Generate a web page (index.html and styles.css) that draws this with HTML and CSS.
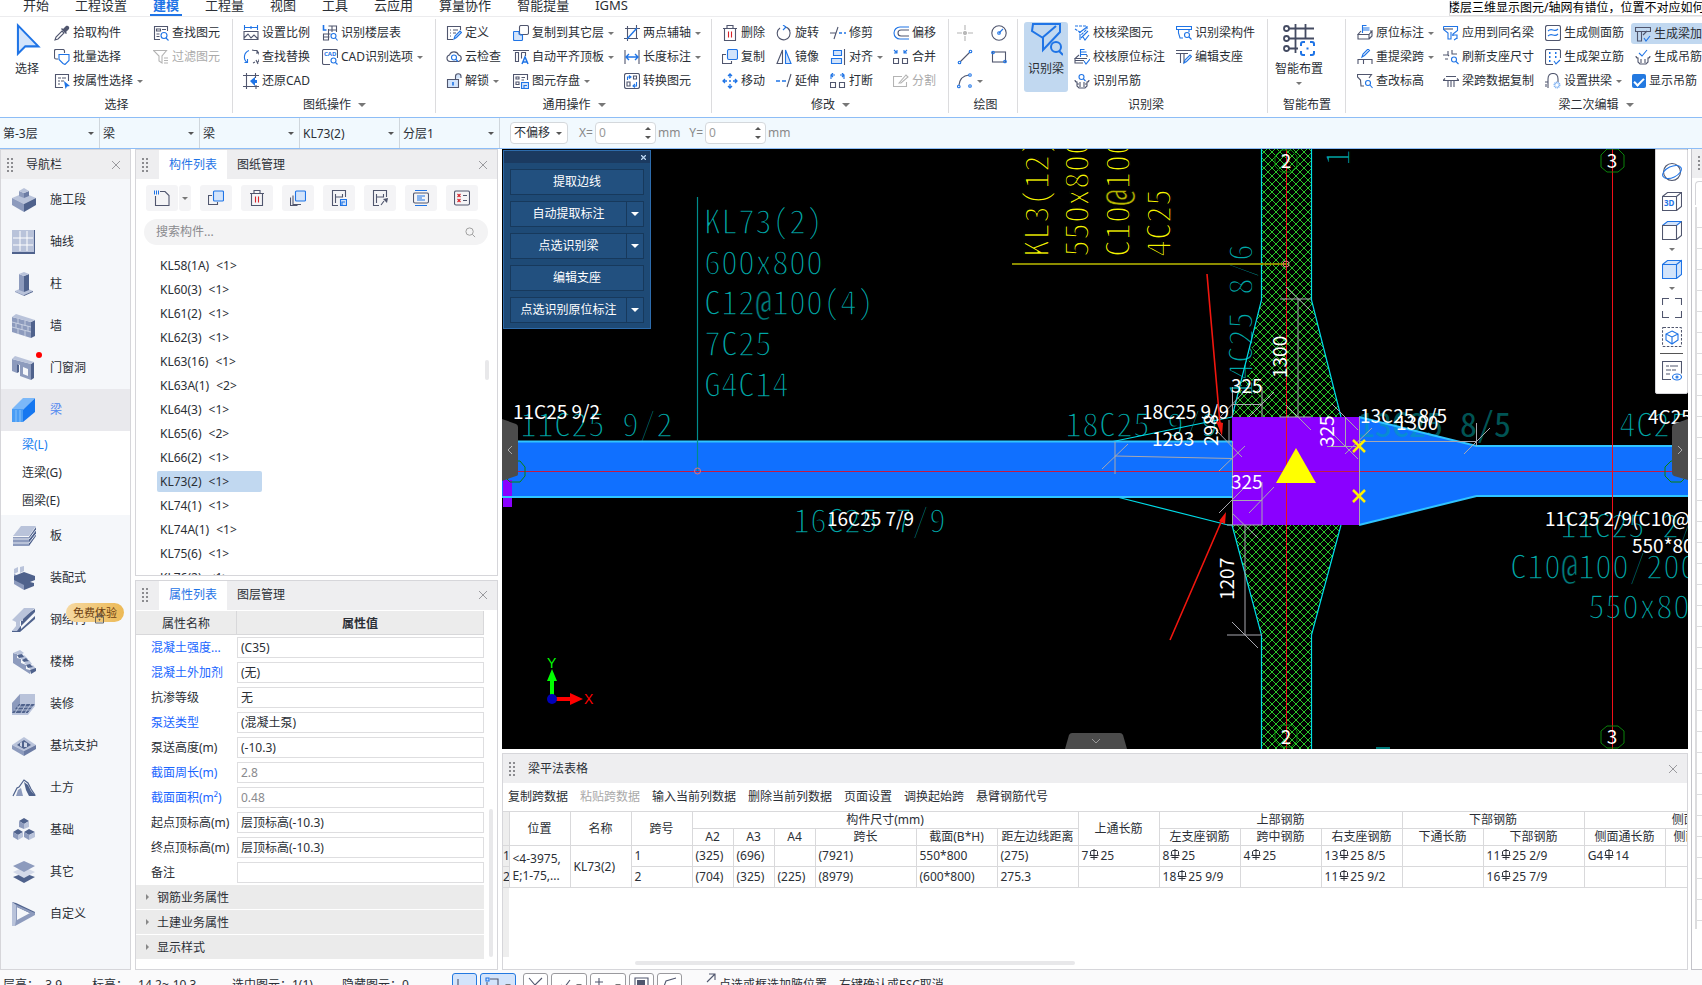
FILE: index.html
```html
<!DOCTYPE html>
<html lang="zh-CN">
<head>
<meta charset="utf-8">
<title>梁建模</title>
<link rel="stylesheet" href="styles.css">
</head>
<body>
<svg class="defs" aria-hidden="true">
  <symbol id="rebar" viewBox="0 0 12 12"><path d="M6 0v11M1.500 6.500h9M2.500 8.500h7M4 1.500h4.500l1 1v3l-1 1M4 1.500l-1.500 1v3l1.500 1"/></symbol>
  <symbol id="grip" viewBox="0 0 6 14"><path d="M0 0h2v2H0zM4 0h2v2H4zM0 4h2v2H0zM4 4h2v2H4zM0 8h2v2H0zM4 8h2v2H4zM0 12h2v2H0zM4 12h2v2H4z"/></symbol>
  <symbol id="cross" viewBox="0 0 8 8"><path d="M0 0l8 8M8 0L0 8"/></symbol>
</svg>

<nav class="menu">
  <a href="#">开始</a><a href="#">工程设置</a><a href="#" class="on">建模</a><a href="#">工程量</a><a href="#">视图</a><a href="#">工具</a><a href="#">云应用</a><a href="#">算量协作</a><a href="#">智能提量</a><a href="#">IGMS</a>
  <p class="ticker"><span>楼层三维显示图元/轴网有错位，位置不对应如何</span></p>
</nav>

<div class="ribbon">
  <section class="group g-select">
    <div class="tools">
      <button class="big"><svg viewBox="0 0 30 30"><path class="b f" stroke-width="1.800" d="M7 3l18 18.500H13.500L7 28z"/></svg><span>选择</span></button>
      <div class="col">
        <button><svg class="i" viewBox="0 0 16 16"><path d="M1 15l1-3 6-6 2 2-6 6z"/><path class="s" d="M7 4l5 5 1-1-1-1 3-3c1-2-1-4-3-3L9 4 8 3z"/></svg>拾取构件</button>
        <button><svg class="i" viewBox="0 0 16 16"><path d="M4 10H2c-1 0-1.500-.5-1.500-1.500v-7C.5 1 1 .5 2 .5h7c1 0 1.500.5 1.500 1.500v2"/><path class="b" d="M5 5.500h10v6l-4 4-2-1-4-4z"/></svg>批量选择</button>
        <button><svg class="i" viewBox="0 0 16 16"><path d="M9 14.500H1.500v-13h13V8M4 5h3M8 5h4M4 8h2M7 8h3M4 11h2"/><path class="bs" d="M10 8l6 5-3 .5L11.500 16z"/></svg>按属性选择<i class="car"></i></button>
      </div>
      <div class="col">
        <button><svg class="i" viewBox="0 0 16 16"><path d="M7 14.500H1.500v-13h13V6M3.500 4h4v2h-4zM3.500 9h3M3.500 11.500h3M9 4.500h4"/><circle class="b" cx="11" cy="10.500" r="3"/><path class="b" d="M13 13l2.500 2.500"/></svg>查找图元</button>
        <button class="off"><svg class="i" viewBox="0 0 16 16"><path d="M.5 1.500h13L9 7v7l-3-2V7zM11 9h4M11 11.500h4M11 14h4"/></svg>过滤图元</button>
      </div>
    </div>
    <h2>选择</h2>
  </section>

  <section class="group g-draw">
    <div class="tools">
      <div class="col">
        <button><svg class="i" viewBox="0 0 16 16"><path class="b" d="M1 2.500h14M1.500 0v5M8 1v3M14.500 0v5"/><path d="M1 6.500h14v8H1zM1 13l4-4 3 4 3-3 4 4"/></svg>设置比例</button>
        <button><svg class="i" viewBox="0 0 16 16"><path class="b" d="M6 1.500a7 7 0 0 0-2 12M1.500 13.500H4.500V10"/><path d="M11 1.500h3v3.500M14 2a8 8 0 0 1 0 12M9 1l2 .5M10 14l2-1M13 11l2 4"/></svg>查找替换</button>
        <button><svg class="i" viewBox="0 0 16 16"><path d="M3.500 0v16M0 2.500h16M12.500 0v5M0 13.500h16M13 12v4"/><path class="bs" d="M7 8l5-4v3h2v3h-2v3z"/></svg>还原CAD</button>
      </div>
      <div class="col">
        <button><svg class="i" viewBox="0 0 16 16"><path class="b" stroke-width="1.600" d="M1.500 0v5h3"/><path d="M6.500 1h8v6M6.500 5h8M10 1v6M6.500 4v11H1.500V9h7M1.500 12h6"/><circle class="b" cx="11.500" cy="11" r="2.500"/><path class="b" d="M13.500 13l2 2.500"/></svg>识别楼层表</button>
        <button><svg class="i" viewBox="0 0 16 16"><path d="M8 15.500H2c-1 0-1.500-.5-1.500-1.500V2C.5 1 1 .5 2 .5h12c1 0 1.500.5 1.500 1.500v7"/><text x="2" y="7">CAD</text><circle class="b" cx="11.500" cy="11.500" r="2.500"/><path class="b" d="M13.500 13.500l2 2"/></svg>CAD识别选项<i class="car"></i></button>
      </div>
    </div>
    <h2>图纸操作<i class="car"></i></h2>
  </section>

  <section class="group g-common">
    <div class="tools">
      <div class="col">
        <button><svg class="i" viewBox="0 0 16 16"><path d="M7 14.500H1.500v-13h13V5M4 5h1M7 5h5M4 8h1M7 8h3M4 11h1"/><path class="b f" d="M8 14l1-3 5-5 1.500 1.500-5 5z"/></svg>定义</button>
        <button><svg class="i" viewBox="0 0 16 16"><path d="M4 12.500a3.300 3.300 0 0 1-.5-6.500 4.800 4.800 0 0 1 9 0 3.300 3.300 0 0 1 0 6.500z"/><circle class="b" cx="8" cy="8.500" r="2.500"/><path class="b" d="M10 10.500l2 2"/></svg>云检查</button>
        <button><svg class="i" viewBox="0 0 16 16"><path class="f" d="M1.500 6.500h11v8h-11zM9.500 6V3.500a2.700 2.700 0 0 1 5.500 0V5"/><path class="b" stroke-width="1.600" d="M7 9v3.500"/></svg>解锁<i class="car"></i></button>
      </div>
      <div class="col">
        <button><svg class="i" viewBox="0 0 16 16"><rect x="6.500" y=".5" width="9" height="9" rx="1.500"/><path class="b f" d="M6 6.500H1c-.5 0-.5.500-.5 1v7.000c0 .5.5 1 1 1h7c.5 0 1-.5 1-1V10H7.500L6 9z"/></svg>复制到其它层<i class="car"></i></button>
        <button><svg class="i" viewBox="0 0 16 16"><path d="M0 1.500h16M2.500 3.500h3v9h-3zM8.500 3.500h4V7M8.500 3.500v6"/><path class="b" stroke-width="1.500" d="M9 15l3-7 3 7M10 13h4"/></svg>自动平齐顶板<i class="car"></i></button>
        <button><svg class="i" viewBox="0 0 16 16"><path d="M7 14.500H.5v-13h14V7M3 4h3v2H3zM8.500 4.500H12M3 9h3v2.500H3zM8.500 7H11"/><path class="b f" d="M8.500 9.500h7v6h-7zM11 15v-2.500h3"/></svg>图元存盘<i class="car"></i></button>
      </div>
      <div class="col">
        <button><svg class="i" viewBox="0 0 16 16"><path d="M3.500 1v15M12.500 0v14M1 3.500h15M0 13.500h14"/><path class="b" stroke-width="1.400" d="M3 14L13 3"/></svg>两点辅轴<i class="car"></i></button>
        <button><svg class="i" viewBox="0 0 16 16"><path d="M1 1v14M15 1v14"/><path class="b" stroke-width="1.400" d="M2 8h12M5 5L2 8l3 3M11 5l3 3-3 3"/></svg>长度标注<i class="car"></i></button>
        <button><svg class="i" viewBox="0 0 16 16"><rect x=".5" y=".5" width="15" height="15" rx="2"/><path d="M9.500 3h3v3h-3zM3 9h3v4H3z"/><path class="b" d="M3.500 7V4h3M5 2.500L7 4 5 5.500M12.500 9v4h-3M11 11l-2 2 2 1.500"/></svg>转换图元</button>
      </div>
    </div>
    <h2>通用操作<i class="car"></i></h2>
  </section>

  <section class="group g-modify">
    <div class="tools">
      <div class="col">
        <button><svg class="i" viewBox="0 0 16 16"><path d="M1 3.500h14M5 3V.5h6V3M2.500 4v11.500h11V4"/><path class="r" d="M6.500 6.500v6M9.500 6.500v6"/></svg>删除</button>
        <button><svg class="i" viewBox="0 0 16 16"><path d="M4 5.500H.5v9h9V12"/><rect class="b f" x="5.500" y=".5" width="10" height="10" rx="1.500"/></svg>复制</button>
        <button><svg class="i" viewBox="0 0 16 16"><path class="b" stroke-width="1.300" d="M8 1v4M8 11v4M1 8h4M11 8h4M6 3l2-2 2 2M6 13l2 2 2-2M3 6L1 8l2 2M13 6l2 2-2 2M7 8h2"/></svg>移动</button>
      </div>
      <div class="col">
        <button><svg class="i" viewBox="0 0 16 16"><path d="M9 2a6.500 6.500 0 1 1-5 1M11 2.500A6.500 6.500 0 0 1 14 6"/><path class="b" d="M7 0l3 2-3 3"/></svg>旋转</button>
        <button><svg class="i" viewBox="0 0 16 16"><path d="M6.500 1v13.500H1z"/><path class="b f" d="M9.500 1v13.500H15z"/></svg>镜像</button>
        <button><svg class="i" viewBox="0 0 16 16"><path class="b" stroke-width="1.400" d="M0 8h4M6 8h4"/><path d="M11 14l4-13"/></svg>延伸</button>
      </div>
      <div class="col">
        <button><svg class="i" viewBox="0 0 16 16"><path d="M0 8h6M4 14L8 2"/><path class="b" stroke-width="1.400" d="M9 8h3M14 8h2"/></svg>修剪</button>
        <button><svg class="i" viewBox="0 0 16 16"><path class="b f" d="M3.500 1.500h8v5h-8zM1.500 9.500h10v5h-10z"/><path d="M14.500 0v16"/></svg>对齐<i class="car"></i></button>
        <button><svg class="i" viewBox="0 0 16 16"><path d="M.5 9.500h5v5h-5zM9.500 9.500h5v5h-5z"/><path class="b" d="M5 2H1v4M3 0L1 2l2 2M10 2h4v4M12 0l2 2-2 2"/></svg>打断</button>
      </div>
      <div class="col">
        <button><svg class="i" viewBox="0 0 16 16"><path class="b" d="M16 2H7a6 6 0 0 0 0 12h9"/><path d="M16 5H8a3 3 0 0 0 0 6h8"/></svg>偏移</button>
        <button><svg class="i" viewBox="0 0 16 16"><path d="M.5 9.500h5v5h-5zM9.500 9.500h5v5h-5z"/><path class="b" d="M1 1l3 3M4 1v3H1M14 1l-3 3M11 1v3h3"/></svg>合并</button>
        <button class="off"><svg class="i" viewBox="0 0 16 16"><path d="M9 3.500H.5v10h13V9M6 10l7-8 2 2-7 6z"/></svg>分割</button>
      </div>
    </div>
    <h2>修改<i class="car"></i></h2>
  </section>

  <section class="group g-paint">
    <div class="tools">
      <div class="col">
        <button aria-label="点"><svg class="i off" viewBox="0 0 16 16"><path d="M8 0v5M8 11v5M0 8h5M11 8h5"/><circle cx="8" cy="8" r="1.500" fill="#bbb"/></svg></button>
        <button aria-label="直线"><svg class="i" viewBox="0 0 16 16"><path d="M3 13L13 3"/><circle class="b" cx="2.500" cy="13.500" r="1.300"/><circle class="b" cx="13.500" cy="2.500" r="1.300"/></svg></button>
        <button aria-label="弧"><svg class="i" viewBox="0 0 16 16"><path d="M2 12Q3 3 12 2"/><circle class="b" cx="1.800" cy="13.500" r="1.300"/><circle class="b" cx="13" cy="2" r="1.300"/><circle class="b" cx="13" cy="13" r="1.300"/></svg><i class="car"></i></button>
      </div>
      <div class="col">
        <button aria-label="圆"><svg class="i" viewBox="0 0 16 16"><circle cx="8" cy="8" r="7.200"/><path class="b" d="M8 8l4-4"/><circle class="b" cx="8" cy="8" r="1.300"/></svg></button>
        <button aria-label="矩形"><svg class="i" viewBox="0 0 16 16"><rect x="1.500" y="3" width="13" height="10"/><circle class="b" cx="2" cy="3.500" r="1.300"/><circle class="b" cx="14" cy="12.500" r="1.300"/></svg></button>
      </div>
    </div>
    <h2>绘图</h2>
  </section>

  <section class="group g-beam">
    <div class="tools">
      <button class="big lit"><svg viewBox="0 0 34 34"><path class="b" stroke-width="2" d="M4 2h27v8L14 28v-12L3 9zM13 16L27 4"/><circle class="b" stroke-width="2" cx="27" cy="25" r="5"/><path class="b" stroke-width="2" d="M30 29l4 4"/></svg><span>识别梁</span></button>
      <div class="col">
        <button><svg class="i" viewBox="0 0 16 16"><path class="b" stroke-dasharray="3 1" d="M1 1h12v3L6 11v4V7L1 4"/><path class="b" d="M5 8l8-6M7 13l7-7M9 12l2 3 4-5"/></svg>校核梁图元</button>
        <button><svg class="i" viewBox="0 0 16 16"><path class="b" d="M6.500 8V.5h4M6.500 3h6M6 5.500h7M10 12l2 3 4-5"/><path d="M5 6L1 9.500h12M1 9.500V14h8M13 8V6M1 11.500h9"/></svg>校核原位标注</button>
        <button><svg class="i" viewBox="0 0 16 16"><circle class="b" cx="7.500" cy="4" r="2.500"/><path class="b" d="M9.500 6l2 2"/><path d="M1 7c0 2 1 2 2 2v4l2 2h6l2-2V9c1 0 2 0 2-2M6 9v5M10 9v5M3 11h2M11 11h2"/></svg>识别吊筋</button>
      </div>
      <div class="col">
        <button><svg class="i" viewBox="0 0 16 16"><path class="b" d="M.5 1.500h15v3H.5zM2.500 5v3l1.500 5h3M13 5v2"/><circle class="b" cx="11" cy="10" r="2.500"/><path class="b" d="M13 12l2.500 2.500"/></svg>识别梁构件</button>
        <button><svg class="i" viewBox="0 0 16 16"><path d="M0 1.500h16M0 4.500h12M4.500 5v9M8 14V5"/><path class="b" d="M8 14l1-3 5-5 1.500 1.500-5 5z"/></svg>编辑支座</button>
      </div>
    </div>
    <h2>识别梁</h2>
  </section>

  <section class="group g-smart">
    <div class="tools">
      <button class="big"><svg viewBox="0 0 34 34"><path class="d" stroke-width="1.800" d="M7 6.500h25M7 16.500h25M7 26.500h9M13.500 2v29M23.500 2v15"/><circle class="d" stroke-width="1.800" cx="4.500" cy="6.500" r="2.500"/><circle class="d" stroke-width="1.800" cx="4.500" cy="16.500" r="2.500"/><circle class="d" stroke-width="1.800" cx="4.500" cy="26.500" r="2.500"/><path class="b" stroke-width="2" d="M19 24v-2q0-2 2-2h2M28 20h2q2 0 2 2v2M32 29v2q0 2-2 2h-2M23 33h-2q-2 0-2-2v-2M24.500 26.500h2"/></svg><span>智能布置</span><i class="car"></i></button>
    </div>
    <h2>智能布置</h2>
  </section>

  <section class="group g-second">
    <div class="tools">
      <div class="col">
        <button><svg class="i" viewBox="0 0 16 16"><path class="b" d="M5.500 8V.5h4M5.500 3h7M5.500 5h7"/><path d="M4 6L1 9.500h11l3-3.500h-2M1 9.500V14h11V9.500M12 14l3-3V6"/></svg>原位标注<i class="car"></i></button>
        <button><svg class="i" viewBox="0 0 16 16"><path class="b" d="M5 8l1-3 5-5 1.500 1.500-5 5z"/><path d="M1 15V10.500h14V15M6.500 10.500V15"/></svg>重提梁跨<i class="car"></i></button>
        <button><svg class="i" viewBox="0 0 16 16"><path d="M7 13H4L3.500 7 .5 4V1.500h14L12 5"/><circle class="b" cx="11" cy="10" r="2.500"/><path class="b" d="M13 12l2.500 3"/></svg>查改标高</button>
      </div>
      <div class="col">
        <button><svg class="i" viewBox="0 0 16 16"><path class="b" d="M.5 1.500h14v4L10 9v2M.5 1.500v3L5 8v6h3V7M9 10h5v4M11 15l3-2"/><path d="M1 4h9"/></svg>应用到同名梁</button>
        <button><svg class="i" viewBox="0 0 16 16"><path d="M0 6h5V2M9 1v4h5M5 10H2M5 6l1 1"/><circle class="b" cx="11" cy="10.500" r="2.500"/><path class="b" d="M13 12.500l2.500 2.500"/></svg>刷新支座尺寸</button>
        <button><svg class="i" viewBox="0 0 16 16"><path d="M3 3.500h10M0 7.500h16M2 5.500l-2 2M14 5.500l2 2M5 7.500V14M8 7.500V14M11 7.500V14"/></svg>梁跨数据复制</button>
      </div>
      <div class="col">
        <button><svg class="i" viewBox="0 0 16 16"><rect x=".5" y=".5" width="15" height="15" rx="2"/><path class="b" d="M3 6q2-2 5-1t5-1M3 11q2-2 5-1t5-1"/></svg>生成侧面筋</button>
        <button><svg class="i" viewBox="0 0 16 16"><path d="M8 15.500H2c-1 0-1.500-.5-1.500-1.500V2C.5 1 1 .5 2 .5h12c1 0 1.500.5 1.500 1.500v7"/><path class="b" stroke-width="2" d="M4 4h1.500M10 4h1.500M4 8h1.500M10 8h1.500M4 12h1.500"/><path class="b" d="M9 12l2 3 4-4"/></svg>生成架立筋</button>
        <button><svg class="i" viewBox="0 0 16 16"><path d="M0 9h3v6M3 9V6q0-5.500 5-5.500T13 6v3M1 11v3"/><circle cx="12" cy="12" r="2.500" stroke="#7fb2f2" stroke-width="2" stroke-dasharray="1 .5"/></svg>设置拱梁<i class="car"></i></button>
      </div>
      <div class="col last">
        <button class="lit"><svg class="i" viewBox="0 0 16 16"><path d="M.5 1.500h15v4H.5zM2.500 6v9h4V6M12 5L8 9"/><path class="b" d="M9 12l2 3 4-5"/></svg>生成梁加腋</button>
        <button><svg class="i" viewBox="0 0 16 16"><path class="b" d="M4 4l3 3 5-6"/><path d="M1 7c0 2 1 2 2 2v4l2 2h6l2-2V9c1 0 2 0 2-2M6 10v4M10 10v4"/></svg>生成吊筋</button>
        <label class="check"><input type="checkbox" checked>显示吊筋</label>
      </div>
    </div>
    <h2>梁二次编辑<i class="car"></i></h2>
  </section>
</div>

<div class="options">
  <span class="combo"><select aria-label="楼层"><option>第-3层</option></select></span>
  <span class="combo"><select aria-label="类别"><option>梁</option></select></span>
  <span class="combo"><select aria-label="类型"><option>梁</option></select></span>
  <span class="combo"><select aria-label="构件"><option>KL73(2)</option></select></span>
  <span class="combo"><select aria-label="分层"><option>分层1</option></select></span>
  <span class="combo boxed"><select aria-label="偏移"><option>不偏移</option></select></span>
  <span class="offset"><label for="ox">X=</label><span class="spin"><input id="ox" value="0"></span>mm</span>
  <span class="offset"><label for="oy">Y=</label><span class="spin"><input id="oy" value="0"></span>mm</span>
</div>

<main>
  <aside class="nav">
    <header class="bar"><svg class="grip"><use href="#grip"/></svg><span>导航栏</span><button class="x" aria-label="关闭"><svg><use href="#cross"/></svg></button></header>
    <a href="#"><svg viewBox="0 0 24 24"><path fill="#b9c3da" d="M0 10l12-5 12 5-12 6z"/><path fill="#8d9bbd" d="M0 10l12 6v8L0 17z"/><path fill="#4f628c" d="M24 10l-12 6v8l12-7z"/><path fill="#8d9bbd" d="M7 3l5 2v5l-5-2z"/><path fill="#6c7ca4" d="M17 3l-5 2v5l5-2z"/><path fill="#b9c3da" d="M7 3l5-3 5 3-5 2z"/></svg>施工段</a>
    <a href="#"><svg viewBox="0 0 24 24"><path fill="#4f628c" d="M0 0h23v24H0z"/><path fill="#b9c3da" d="M0 0h22v22H0z"/><path stroke="#fff" fill="none" d="M1 8h20M1 15h20M8 1v20M15 1v20"/></svg>轴线</a>
    <a href="#"><svg viewBox="0 0 24 24"><path fill="#b9c3da" d="M3 19l9-4 9 4-9 4z"/><path fill="#4f628c" d="M21 19v1l-9 4v-1z"/><path fill="#8d9bbd" d="M3 19v1l9 4v-1zM7 2l5 2v16l-5-2z"/><path fill="#4f628c" d="M17 2l-5 2v16l5-2z"/><path fill="#b9c3da" d="M7 2l5-2 5 2-5 2z"/></svg>柱</a>
    <a href="#"><svg viewBox="0 0 24 24"><path fill="#8d9bbd" d="M0 3l19 5v16L0 18z"/><path fill="#4f628c" d="M19 8l4-2v16l-4 2z"/><path fill="#b9c3da" d="M0 3l4-3 19 6-4 2z"/><path stroke="#c7cfe0" fill="none" d="M0 8l19 5M0 13l19 5M6 5v5M13 7v5M4 9v5M10 11v5M16 12v5M6 15v5M13 17v5"/></svg>墙</a>
    <a href="#"><svg viewBox="0 0 24 24"><path fill="#8d9bbd" fill-rule="evenodd" d="M0 3l19 5v16L8 20V9L5 8v9l-5-2zM11 11v7l5 2v-7z"/><path fill="#4f628c" d="M19 8l3-2v16l-3 2zM5 8l2 1v7l-2 1z"/><path fill="#b9c3da" d="M0 3l3-3 19 6-3 2z"/></svg>门窗洞<i class="dot"></i></a>
    <a href="#" class="on"><svg viewBox="0 0 24 24"><path fill="#1677f0" d="M23 0v14L11 24V11z"/><path fill="#7cb8f8" d="M0 11L11 0h12L11 12z"/><path fill="#4a9df5" d="M0 11h11v13H0z"/><path stroke="#88c2fa" d="M4 12v12M8 12v12"/></svg>梁</a>
    <div class="sub"><a href="#" class="on">梁(L)</a><a href="#">连梁(G)</a><a href="#">圈梁(E)</a></div>
    <a href="#"><svg viewBox="0 0 24 24"><path fill="#4f628c" d="M24 3v9L17 22v-9z"/><path fill="#8d9bbd" d="M1 13h16v9H1z"/><path fill="#b9c3da" d="M1 12L9 2h15l-7 10z"/><path stroke="#e4e9f3" fill="none" d="M1 15h16l7-9M1 19h16l7-9"/></svg>板</a>
    <a href="#"><svg viewBox="0 0 24 24"><path fill="#8d9bbd" d="M2 8l10 4v12L2 18z"/><path fill="#b9c3da" d="M2 3l4-2v5l-4 2zM8 1l4-1v5l-4 2z"/><path fill="#4f628c" d="M2 10l10-4 11 4v4l-5 2 4 1v3l-10 4v-5L2 14z"/></svg>装配式</a>
    <a href="#"><svg viewBox="0 0 24 24"><path fill="#4f628c" d="M23 1v3L9 18v3l14-13v3L8 24H0v-1l9-5V10z"/><path fill="#b9c3da" d="M0 12L12 0h11L11 11v2h-3v6l-3 4H0l4-5v-4z"/></svg>钢结构<em class="badge">免费体验</em><svg class="lock" viewBox="0 0 10 12"><path d="M.5 4h9v7h-9zM3 4V1h4v3M5 6.500v2M4 7h2"/></svg></a>
    <a href="#"><svg viewBox="0 0 24 24"><path fill="#8d9bbd" d="M1 3l4 1v4l4 1v4l5 2v4l4 1v4L1 13z"/><path fill="#b9c3da" d="M1 3l7-3 4 3-4 2zM8 8l4-3 4 4-4 2zM12 13l5-3 3 4-4 2zM17 18l4-3 3 4-4 2z"/><path fill="#4f628c" d="M5 5l5-1 2 3-5 1zM10 10l4-2 3 3-5 1zM14 15l4-1 3 3-5 1zM18 20l6-2v3l-5 3z"/></svg>楼梯</a>
    <a href="#"><svg viewBox="0 0 24 24"><path fill="#8d9bbd" d="M0 11L8 2v11l-8 9z"/><path fill="#b9c3da" d="M8 2h15v12H8z"/><path fill="#4f628c" d="M0 21l7-9h16l-7 9z"/><path fill="#b9c3da" d="M0 21h16v2H0zM16 21l7-9v2l-7 9z"/><path stroke="#b9c3da" fill="none" d="M2 18h17M5 15h16M9 12l-6 9M14 12l-5 9M19 12l-6 9"/></svg>装修</a>
    <a href="#"><svg viewBox="0 0 24 24"><path fill="#b9c3da" d="M0 11l12-8 12 8-12 6z"/><path fill="#8d9bbd" d="M0 11l12 6v5L0 15z"/><path fill="#6c7ca4" d="M24 11l-12 6v5l12-7z"/><path fill="#4f628c" d="M5 11l7-5 7 5-7 4z"/><path fill="#cdd5e6" d="M8 9l2-1v5l-2-1zM12 8l3 1v4h-3z"/></svg>基坑支护</a>
    <a href="#"><svg viewBox="0 0 24 24"><path stroke="#4f628c" stroke-width="1.200" fill="none" d="M1 20L5 12l2-1 5-7 4 3 3 6 4 6"/><path fill="#4f628c" d="M12 6l4 3 3 6 5 5h-7l-3-6z"/><path fill="#8d9bbd" d="M6 14l3-2 2 8H4z"/></svg>土方</a>
    <a href="#"><svg viewBox="0 0 24 24"><path fill="#4f628c" d="M7 3l5-3 5 3-5 3zM1 14l5-3 5 3-5 3zM12 14l5-3 6 3-6 3z"/><path fill="#8d9bbd" d="M7 3l5 3v5L7 9zM1 14l5 3v5l-5-3zM12 14l5 3v5l-5-3z"/><path fill="#b9c3da" d="M17 3l-5 3v5l5-2zM11 14l-5 3v5l5-3zM23 14l-6 3v5l6-3z"/></svg>基础</a>
    <a href="#"><svg viewBox="0 0 24 24"><path fill="#4f628c" d="M1 17l11-4 11 4-11 6z"/><path fill="#d3d9e8" d="M1 12l11-5 11 5-11 6z"/><path fill="#8d9bbd" d="M1 6l11-5 11 5-11 6z"/></svg>其它</a>
    <a href="#"><svg viewBox="0 0 24 24"><path fill="#4f628c" d="M0 0l4 1 19 9-1 3L5 5z"/><path fill="#8d9bbd" fill-rule="evenodd" d="M0 0l3 2 20 9v2L3 24H0zM5 5v13l13-7z"/><path fill="#b9c3da" d="M0 0l4 3v15l-1 6H0z"/></svg>自定义</a>
  </aside>

  <div class="side">
    <section class="panel list-panel">
      <header class="bar"><svg class="grip"><use href="#grip"/></svg><button class="tab on">构件列表</button><button class="tab">图纸管理</button><button class="x" aria-label="关闭"><svg><use href="#cross"/></svg></button></header>
      <div class="toolbar">
        <button class="new" aria-label="新建"><svg class="i" viewBox="0 0 16 16"><path d="M6 1.500h5l4 4v10H1.500V6"/><path class="b" stroke-dasharray="1 1" d="M0 1h5M0 2h5M0 3h5M0 4h5"/></svg></button><button class="drop" aria-label="更多"><i class="car"></i></button>
        <button aria-label="复制"><svg class="i" viewBox="0 0 16 16"><path d="M4 5.500H.5v9h9V12"/><rect class="b f" x="5.500" y="1" width="10" height="10" rx="1"/></svg></button>
        <button aria-label="删除"><svg class="i" viewBox="0 0 16 16"><path d="M1 3.500h14M5 3V.5h6V3M2.500 4v11.500h11V4"/><path class="r" d="M6.500 6.500v6M9.500 6.500v6"/></svg></button>
        <button aria-label="层间复制"><svg class="i" viewBox="0 0 16 16"><path d="M3 5.500v9h8M.5 7.500v8h7"/><rect class="b f" x="5.500" y="1" width="10" height="10" rx="1"/></svg></button>
        <button aria-label="存档"><svg class="i" viewBox="0 0 16 16"><path d="M7 15.500H1.500V.5h13V7M4.500 4v9M4.500 7h7V4"/><path class="b f" d="M9.500 9.500h6v6h-6zM11 15v-3h3"/></svg></button>
        <button aria-label="提取"><svg class="i" viewBox="0 0 16 16"><path d="M7 15.500H1.500V.5h13V7M4.500 4v9M4.500 7h7V4M9 15l3-4"/><path class="s" d="M11 9l4 4 1-5z"/></svg></button>
        <button aria-label="排序"><svg class="i" viewBox="0 0 16 16"><rect x=".5" y="3" width="15" height="10" rx="1.500"/><path class="b" d="M2 .5h12M2 15.500h12M4 6h8M4 8h5M4 10h8"/></svg></button>
        <button aria-label="检查"><svg class="i" viewBox="0 0 16 16"><rect x=".5" y="1" width="15" height="14" rx="1.500"/><path d="M9 5.500h4M9 10.500h4"/><path class="r" d="M3.500 4l3 3M6.500 4l-3 3M3.500 9l3 3M6.500 9l-3 3"/></svg></button>
      </div>
      <label class="search"><input placeholder="搜索构件..." aria-label="搜索构件"><svg viewBox="0 0 12 12"><circle cx="5" cy="5" r="4"/><path d="M8 8l3 3"/></svg></label>
      <ul class="members">
        <li>KL58(1A)<span>&lt;1&gt;</span></li><li>KL60(3)<span>&lt;1&gt;</span></li><li>KL61(2)<span>&lt;1&gt;</span></li><li>KL62(3)<span>&lt;1&gt;</span></li><li>KL63(16)<span>&lt;1&gt;</span></li><li>KL63A(1)<span>&lt;2&gt;</span></li><li>KL64(3)<span>&lt;1&gt;</span></li><li>KL65(6)<span>&lt;2&gt;</span></li><li>KL66(2)<span>&lt;1&gt;</span></li><li class="on">KL73(2)<span>&lt;1&gt;</span></li><li>KL74(1)<span>&lt;1&gt;</span></li><li>KL74A(1)<span>&lt;1&gt;</span></li><li>KL75(6)<span>&lt;1&gt;</span></li><li>KL76(2)<span>&lt;1&gt;</span></li>
      </ul>
      <i class="thumb t-list"></i>
    </section>

    <section class="panel prop-panel">
      <header class="bar"><svg class="grip"><use href="#grip"/></svg><button class="tab on">属性列表</button><button class="tab">图层管理</button><button class="x" aria-label="关闭"><svg><use href="#cross"/></svg></button></header>
      <table class="props">
        <thead><tr><th>属性名称</th><th class="v">属性值</th></tr></thead>
        <tbody>
          <tr><td class="k"><label for="p1">混凝土强度...</label></td><td><input id="p1" value="(C35)"></td></tr>
          <tr><td class="k"><label for="p2">混凝土外加剂</label></td><td><input id="p2" value="(无)"></td></tr>
          <tr><td><label for="p3">抗渗等级</label></td><td><input id="p3" value="无"></td></tr>
          <tr><td class="k"><label for="p4">泵送类型</label></td><td><input id="p4" value="(混凝土泵)"></td></tr>
          <tr><td><label for="p5">泵送高度(m)</label></td><td><input id="p5" value="(-10.3)"></td></tr>
          <tr><td class="k"><label for="p6">截面周长(m)</label></td><td><input id="p6" class="ro" readonly value="2.8"></td></tr>
          <tr><td class="k"><label for="p7">截面面积(m²)</label></td><td><input id="p7" class="ro" readonly value="0.48"></td></tr>
          <tr><td><label for="p8">起点顶标高(m)</label></td><td><input id="p8" value="层顶标高(-10.3)"></td></tr>
          <tr><td><label for="p9">终点顶标高(m)</label></td><td><input id="p9" value="层顶标高(-10.3)"></td></tr>
          <tr><td><label for="p10">备注</label></td><td><input id="p10" value=""></td></tr>
          <tr class="fold"><td colspan="2"><i></i>钢筋业务属性</td></tr>
          <tr class="fold"><td colspan="2"><i></i>土建业务属性</td></tr>
          <tr class="fold"><td colspan="2"><i></i>显示样式</td></tr>
        </tbody>
      </table>
      <i class="thumb t-prop"></i>
    </section>
  </div>

  <div class="work">
    <div class="canvas">
      <svg class="cad" xmlns="http://www.w3.org/2000/svg">
        <defs>
          <pattern id="hatch" width="8" height="8" patternUnits="userSpaceOnUse"><path d="M0 0l8 8M8 0L0 8" stroke="#2fdc2f" stroke-width=".9"/></pattern>
        </defs>
        <g transform="translate(-502 -149)">
          <g class="cad-t">
            <text x="704" y="234">KL73(2)</text><text x="704" y="275">600x800</text><text x="704" y="315">C12<tspan class="at">@</tspan>100(4)</text><text x="704" y="356">7C25</text><text x="704" y="397">G4C14</text>
            <text x="520" y="437">11C25&#160;9/2</text><text x="793" y="533">16C25&#160;7/9</text><text x="1065" y="437">18C25&#160;9/9</text>
            <text x="1619" y="437">4C25</text>
            <text x="1560" y="538">11C25&#160;2/9</text><text x="1510" y="579">C10<tspan class="at">@</tspan>100/200(4)</text><text x="1588" y="619">550x800</text>
            <text transform="translate(1350 166) rotate(-90)">11C25</text>
          </g>
          <g stroke="none">
            <path d="M1261.500 149h50v151l29.500 117h-109l29.500-117zM1232 525h109l-29.500 110v114h-50V635z" fill="#000"/>
            <path d="M1261.500 149h50v151l29.500 117h-109l29.500-117zM1232 525h109l-29.500 110v114h-50V635z" fill="url(#hatch)"/>
            <path d="M502 441h730v56H502zM1359 417l117.500 29H1688v50h-211.500L1359 525z" fill="#1070ff"/>
            <path d="M503 480h9v27h-9zM1232 417h127.500v108H1232z" fill="#8a00ff"/>
          </g>
          <g class="cad-t">
            <text class="over" x="1358" y="437">13C25&#160;8/5</text>
            <text transform="translate(1253 397) rotate(-90)">14C25&#160;8/6</text>
          </g>
          <g fill="none" stroke="#00dce8" stroke-width="1.200">
            <path d="M1261.500 149v151L1232 417M1311.500 149v151L1341 417M1232 525l29.500 110v114M1341 525l-29.500 110v114M1113 441.500L1232 417M1117 497l111 28h5"/>
            <path stroke="#2fc4ff" stroke-width="2" d="M502 441.500h730M502 497h730M1359 417l117.500 29H1688M1359 525l117.500-29H1688"/>
            <path stroke="#008c8c" d="M697.500 197v274"/><path stroke="#007a7a" stroke-width="2" d="M1376 748h14"/>
            <path stroke="#8c8c00" stroke-width="2" d="M1012 264h274"/>
            <path stroke="#c41a44" stroke-width="1" d="M502 471.500h1186"/>
            <path stroke="#f01018" stroke-width="1" d="M1286.500 149v600M1612.500 149v600"/>
          </g>
          <g fill="none" stroke="#0a820a"><path d="M1281 150h10l6 6v10l-6 6h-10l-6-6v-10zM1281 725h10l6 6v10l-6 6h-10l-6-6v-10zM1607 149h11l6 6v12l-6 5h-11l-6-5v-12zM1607 726h11l6 5v12l-6 5h-11l-6-5v-12zM510 461h10l5 6v9l-5 6h-10l-6-6v-9zM1671 461h10l6 6v9l-6 6h-10l-6-6v-9z"/></g>
          <g fill="none" stroke="#e07080"><circle cx="697.500" cy="471" r="3"/><circle cx="1286" cy="264" r="3"/></g>
          <g class="cad-y">
            <text transform="translate(1049 257) rotate(-90)">KL3(12)</text><text transform="translate(1089 257) rotate(-90)">550x800</text><text transform="translate(1130 257) rotate(-90)">C10<tspan class="at">@</tspan>100</text><text transform="translate(1171 257) rotate(-90)">4C25</text>
          </g>
          <g fill="none" stroke="#a8a8b0">
            <path d="M1115 456l117 2.500M1115 442v32M1102 469l26-25M1219 471l26-25M1232 404.500h30M1232.500 387v30M1262 387v30M1219 418l26-27M1249 417l25-25M1298 299v118M1280 299h31M1280 417h31M1286 287l25 24M1286 405l25 25M1229 420v23M1216 430l26 27M1345.500 417v29M1327 446.500h29M1332 404l26 26M1332 433l26 26M1345 454l27-26M1360 441.500h117M1476.500 423v23M1464 454l26-26M1232 500.500h30M1232.500 441v84M1262 482v43M1219 513l26-26M1249 513l25-26M1227 525h35M1245 525v110M1227 635h35M1232 513l26 25M1232 622l26 26M1359.500 417v108"/>
          </g>
          <path fill="#ff0" d="M1296 448l20 35h-40z"/>
          <path fill="none" stroke="#fff000" stroke-width="2.500" d="M1353 440l12 12M1365 440l-12 12M1353 490l12 12M1365 490l-12 12"/>
          <g class="cad-w">
            <text x="513" y="419">11C25 9/2</text><text x="827" y="526">16C25 7/9</text><text x="1142" y="419">18C25 9/9</text><text x="1360" y="423">13C25 8/5</text><text x="1396" y="430">1300</text><text x="1152" y="446">1293</text><text x="1231" y="393">325</text><text x="1231" y="489">325</text>
            <text x="1648" y="424">4C25</text><text x="1545" y="526">11C25 2/9(C10@100)</text><text x="1632" y="553">550*800</text>
            <text transform="translate(1334 447) rotate(-90)">325</text><text transform="translate(1287 378) rotate(-90)">1300</text><text transform="translate(1218 446) rotate(-90)">298</text><text transform="translate(1234 600) rotate(-90)">1207</text>
            <g text-anchor="middle"><text x="1286" y="168">2</text><text x="1286" y="744">2</text><text x="1612" y="168">3</text><text x="1612" y="744">3</text></g>
          </g>
          <path fill="none" stroke="#f0160e" stroke-width="1.600" d="M1207 274l13 150M1170 640l52-120"/>
          <path fill="#f0160e" d="M1222 436l-6-15 7 2zM1226 512l-1 12-6-3z"/>
          <g stroke="none"><path fill="#0f0" d="M550 680h4v15h-4zM552 669l5 12h-10z"/><path fill="#f00" d="M556 697h14v4h-14zM583 699l-13 6v-12z"/><circle cx="552" cy="699" r="5" fill="#0000b8"/><text class="axis" x="547" y="668" fill="#0f0">Y</text><text class="axis" x="584" y="704" fill="#f00">X</text></g>
          <g fill="#4c4c4c" stroke="none"><path d="M502 419l14 5q2 1 2 3v47q0 2-2 2l-14 5z"/></g>
          <path fill="none" stroke="#aaa" d="M512 446l-4 4 4 4"/>
        </g>
      </svg>
      <div class="float">
        <header><button aria-label="关闭"><svg><use href="#cross"/></svg></button></header>
        <div class="split"><button>提取边线</button></div>
        <div class="split"><button>自动提取标注</button><button class="more" aria-label="更多"></button></div>
        <div class="split"><button>点选识别梁</button><button class="more" aria-label="更多"></button></div>
        <div class="split"><button>编辑支座</button></div>
        <div class="split"><button>点选识别原位标注</button><button class="more" aria-label="更多"></button></div>
      </div>
      <div class="views">
        <button aria-label="动态观察"><svg class="i" viewBox="0 0 20 20"><circle cx="10" cy="10" r="8.500"/><ellipse class="b" cx="10" cy="10" rx="10" ry="5.500" transform="rotate(-25 10 10)"/></svg></button>
        <button aria-label="三维"><svg class="i" viewBox="0 0 20 20"><path d="M.5 5.500h14v14H.5zM.5 5.500l5-4h14l-5 4M19.500 1.500v14l-5 4"/><text class="t3" x="2" y="15">3D</text></svg></button>
        <button aria-label="俯视"><svg class="i" viewBox="0 0 20 20"><path class="f b" d="M.5 5.500l5-4h14l-5 4z"/><path d="M.5 5.500h14v14H.5zM19.500 1.500v14l-5 4"/></svg></button>
        <i class="car"></i>
        <button aria-label="实体"><svg class="i" viewBox="0 0 20 20"><path class="b cube" d="M.5 5.500h14v14H.5zM.5 5.500l5-4h14l-5 4M19.500 1.500v14l-5 4v-14z"/></svg></button>
        <i class="car"></i>
        <button aria-label="全屏"><svg class="i" viewBox="0 0 20 20"><path d="M.5 7V.5H7M13 .5h6.500V7M19.500 13v6.500H13M7 19.500H.5V13"/></svg></button>
        <button aria-label="局部三维"><svg class="i" viewBox="0 0 20 20"><rect x=".5" y=".5" width="19" height="19" rx="1" stroke-dasharray="2.500 1.500"/><path class="b" d="M10 4l6 3v6l-6 4-6-4V7zM4 7l6 3 6-3M10 10v7"/></svg></button>
        <hr>
        <button aria-label="显示设置"><svg class="i" viewBox="0 0 20 20"><path d="M9 18.500H.5V.5h19v12M4 5h3M8 5h8M4 9h5M10 9h4M4 13h4"/><ellipse class="b" cx="15" cy="16" rx="4.500" ry="3"/><circle class="b" cx="15" cy="16" r="1"/></svg></button>
      </div>
      <svg class="pull right" viewBox="0 0 16 62"><path fill="#4c4c4c" d="M16 0L2 5Q0 6 0 8v46q0 2 2 3l14 4z"/><path fill="none" stroke="#aaa" d="M6 27l4 4-4 4"/></svg>
      <svg class="pull bottom" viewBox="0 0 62 16"><path fill="#4c4c4c" d="M0 16L4 2Q5 0 7 0h48q2 0 3 2l4 14z"/><path fill="none" stroke="#999" d="M27 6l4 4 4-4"/></svg>
    </div>

    <section class="panel sheet">
      <header class="bar"><svg class="grip"><use href="#grip"/></svg><span>梁平法表格</span><button class="x" aria-label="关闭"><svg><use href="#cross"/></svg></button></header>
      <div class="cmds"><button>复制跨数据</button><button class="off">粘贴跨数据</button><button>输入当前列数据</button><button>删除当前列数据</button><button>页面设置</button><button>调换起始跨</button><button>悬臂钢筋代号</button></div>
      <div class="grid">
        <table>
          <colgroup><col class="n"><col class="w61" span="3"><col class="w41" span="3"><col class="w101"><col class="w81" span="7"><col class="w101"><col class="w81"><col class="w101"><col class="w41"></colgroup>
          <thead>
            <tr><th rowspan="2" class="no"></th><th rowspan="2">位置</th><th rowspan="2">名称</th><th rowspan="2">跨号</th><th colspan="6">构件尺寸(mm)</th><th rowspan="2">上通长筋</th><th colspan="3">上部钢筋</th><th colspan="2">下部钢筋</th><th colspan="3">侧面钢筋</th></tr>
            <tr><th>A2</th><th>A3</th><th>A4</th><th>跨长</th><th>截面(B*H)</th><th>距左边线距离</th><th>左支座钢筋</th><th>跨中钢筋</th><th>右支座钢筋</th><th>下通长筋</th><th>下部钢筋</th><th>侧面通长筋</th><th>侧面原位标注筋</th><th>拉筋</th></tr>
          </thead>
          <tbody>
            <tr><td class="no">1</td><td rowspan="2" class="pos">&lt;4-3975,<br>E;1-75,...</td><td rowspan="2">KL73(2)</td><td>1</td><td>(325)</td><td>(696)</td><td></td><td>(7921)</td><td>550*800</td><td>(275)</td><td>7<svg class="rb"><use href="#rebar"/></svg>25</td><td>8<svg class="rb"><use href="#rebar"/></svg>25</td><td>4<svg class="rb"><use href="#rebar"/></svg>25</td><td>13<svg class="rb"><use href="#rebar"/></svg>25 8/5</td><td></td><td>11<svg class="rb"><use href="#rebar"/></svg>25 2/9</td><td>G4<svg class="rb"><use href="#rebar"/></svg>14</td><td></td><td></td></tr>
            <tr><td class="no">2</td><td>2</td><td>(704)</td><td>(325)</td><td>(225)</td><td>(8979)</td><td>(600*800)</td><td>275.3</td><td></td><td>18<svg class="rb"><use href="#rebar"/></svg>25 9/9</td><td></td><td>11<svg class="rb"><use href="#rebar"/></svg>25 9/2</td><td></td><td>16<svg class="rb"><use href="#rebar"/></svg>25 7/9</td><td></td><td></td><td></td></tr>
          </tbody>
        </table>
        <div class="gutter"></div>
      </div>
      <i class="thumb t-sheet"></i>
    </section>
  </div>

  <aside class="edge"><header><svg class="grip"><use href="#grip"/></svg></header><div class="cap"></div><div class="lines"></div></aside>
</main>

<footer class="status">
  <span class="s1">层高：&#160;&#160;3.9</span><span class="s2">标高：&#160;&#160;-14.2~-10.3</span><span class="s3">选中图元：1(1)</span><span class="s4">隐藏图元：0</span>
  <button class="on" aria-label="正交"><svg class="i" viewBox="0 0 16 16"><path d="M1 2v13h14"/></svg></button>
  <button class="on wide" aria-label="捕捉"><svg class="i" viewBox="0 0 16 16"><path class="b" d="M1 1h3v3H1z"/><path d="M5 2h8v10M2 5v8"/></svg><i class="car"></i></button>
  <button class="gap" aria-label="交点"><svg class="i" viewBox="0 0 16 16"><path d="M1 1l6 7 7-7M7 8v6"/></svg></button>
  <button class="wide" aria-label="最近点"><svg class="i" viewBox="0 0 16 16"><path d="M5 8l3 3 6-8"/></svg><i class="car"></i></button>
  <button class="wide" aria-label="动态输入"><svg class="i" viewBox="0 0 16 16"><path d="M4 1v8M0 5h8"/></svg><i class="car"></i></button>
  <button aria-label="图层"><svg class="i" viewBox="0 0 16 16"><path class="s" d="M3 3h8v10H3z"/><path d="M1 1h13v13H1z"/></svg></button>
  <button aria-label="折线"><svg class="i" viewBox="0 0 16 16"><path d="M1 12L4 4l10-3"/></svg></button>
  <svg class="i hint" viewBox="0 0 10 10"><path d="M1 9l8-8M3 1h6v6"/></svg>
  <span>点选或框选加腋位置，右键确认或ESC取消</span>
</footer>
</body>
</html>
```
FILE: styles.css
```css
* { box-sizing: border-box; }
html, body { height: 100%; }
body {
  margin: 0;
  display: flex;
  flex-direction: column;
  overflow: hidden;
  background: #fff;
  color: #2b2f36;
  font: 12px/20px "Noto Sans", "Noto Sans CJK SC", sans-serif;
}
button, input, select { font: inherit; color: inherit; border: 0; margin: 0; padding: 0; background: none; }
a { color: inherit; text-decoration: none; }
h2 { margin: 0; font-size: 12px; font-weight: 400; }
.defs { position: absolute; width: 0; height: 0; }

/* icon strokes */
.i { width: 16px; height: 16px; flex: none; fill: none; stroke: #50566e; stroke-width: 1.1; }
.b { stroke: #1f74e6; fill: none; }
.f { fill: #d3e4fb; }
.cube { fill: #d3e4fb; }
.d { stroke: #444b62; fill: none; }
.r { stroke: #d8232a; }
.s { fill: #50566e; stroke: none; }
.bs { fill: #1f74e6; stroke: none; }
.i text { font-size: 6px; font-weight: 700; fill: #1f74e6; stroke: none; }
.i .t3 { font-size: 8px; }
.i.off { stroke: #b4b4b4; }
.off { color: #aaa; }
.off .i { stroke: #b4b4b4; }
.car { flex: none; border: 3px solid transparent; border-top-color: #777; border-bottom: 0; }

/* menu */
.menu { flex: none; display: flex; align-items: flex-end; height: 17px; padding-left: 10px; border-bottom: 1px solid #ececee; overflow: hidden; font-size: 13px; }
.menu a { position: relative; flex: none; padding: 0 13px; height: 22px; line-height: 22px; }
.menu .on { color: #1f74e6; font-weight: 700; }
.menu .on::after { content: ""; position: absolute; left: 10px; right: 10px; bottom: 0; height: 2px; background: #1f74e6; }
.ticker { margin: 0 0 0 auto; width: 253px; height: 15px; border: solid #ddd; border-width: 0 0 1px 1px; font-size: 12px; line-height: 14px; color: #000; overflow: hidden; white-space: nowrap; }
.ticker span { display: block; margin-left: -2px; }

/* ribbon */
.ribbon { flex: none; display: flex; height: 100px; overflow: hidden; }
.group { flex: none; display: flex; flex-direction: column; padding-top: 4px; position: relative; }
.group::after { content: ""; position: absolute; right: 0; top: 2px; bottom: 4px; width: 1px; background: #dcdcde; }
.tools { display: flex; height: 72px; }
.group h2 { display: flex; justify-content: center; align-items: center; gap: 7px; height: 24px; }
.group h2 .car { border-width: 4px 4px 0; }
.col { flex: none; display: flex; flex-direction: column; }
.col button, .check { display: flex; align-items: center; gap: 3px; height: 24px; white-space: nowrap; }
.col .car { margin-left: 1px; }
.big { flex: none; display: flex; flex-direction: column; align-items: center; height: 70px; margin-top: 1px; border-radius: 3px; }
.big svg { width: 34px; height: 34px; flex: none; fill: none; }
.big span { height: 26px; line-height: 26px; }
.lit { background: #c1d8f0; border-radius: 3px; }
.g-select { width: 233px; }
.g-select .big { width: 54px; }
.g-select .col { width: 99px; }
.g-select .col:last-child { width: 79px; }
.g-draw { width: 203px; padding-left: 10px; }
.g-draw .col { width: 79px; }
.g-draw h2, .g-common h2, .g-modify h2 { margin-left: -10px; }
.g-common { width: 276px; padding-left: 10px; }
.g-common .col:nth-child(1) { width: 67px; }
.g-common .col:nth-child(2) { width: 111px; }
.g-modify { width: 237px; padding-left: 10px; }
.g-modify .col { width: 54px; }
.g-modify .col:nth-child(3) { width: 63px; }
.g-paint { width: 69px; padding-left: 8px; }
.g-paint .col { width: 34px; }
.g-paint h2 { margin-left: -4px; }
.g-beam { width: 250px; padding-left: 6px; }
.g-beam .big { width: 44px; margin-right: 6px; }
.g-beam .col:nth-child(2) { width: 102px; }
.g-smart { width: 78px; }
.g-smart .big { width: 62px; }
.g-second { flex: 1 0 auto; width: 357px; padding-left: 11px; }
.g-second::after { display: none; }
.g-second .col { width: 86px; }
.g-second .col:nth-child(2) { width: 102px; }
.g-second .last { flex: 1; }
.g-second .last button { padding-left: 4px; }
.g-second .lit { height: 21px; margin: 2px 0 1px; }
.g-second h2 { margin-left: 134px; width: 210px; }
.check { padding-left: 1px; }
.check input { appearance: none; width: 14px; height: 14px; border-radius: 2px; background: #2379e0; display: grid; place-items: center; }
.check input::after { content: ""; width: 8px; height: 4px; border: solid #fff; border-width: 0 0 2px 2px; transform: rotate(-45deg); }

/* option bar */
.options { flex: none; display: flex; align-items: center; height: 32px; background: #f1f9fe; border: solid #8dbdf6; border-width: 1px 0; }
.combo { position: relative; width: 100px; height: 30px; border-right: 1px solid #cfd6dc; }
.combo select { appearance: none; width: 100%; height: 100%; padding: 2px 0 0 3px; }
.combo::after { content: ""; position: absolute; right: 5px; top: 14px; border: 3px solid transparent; border-top-color: #555; border-bottom: 0; pointer-events: none; }
.boxed { width: 58px; height: 22px; margin: 0 11px 0 10px; border: 1px solid #d4d8dc; border-radius: 4px; background: #fff; }
.boxed select { padding-top: 0; }
.boxed::after { top: 9px; }
.offset { display: flex; align-items: center; gap: 2px; margin-right: 9px; color: #888; }
.spin { position: relative; width: 61px; height: 22px; border: 1px solid #d4d8dc; border-radius: 4px; background: #fff; }
.spin input { width: 40px; height: 20px; padding-left: 3px; color: #999; display: block; }
.spin::before, .spin::after { content: ""; position: absolute; right: 4px; border: 3px solid transparent; }
.spin::before { top: 4px; border-bottom-color: #555; border-top: 0; }
.spin::after { bottom: 4px; border-top-color: #555; border-bottom: 0; }

/* shared panel parts */
main { flex: 1; min-height: 0; display: flex; }
.bar { flex: none; display: flex; align-items: center; height: 29px; padding-left: 6px; background: #eeeef0; }
.grip { width: 6px; height: 14px; flex: none; fill: #8c8c90; }
.x { margin-left: auto; width: 28px; height: 28px; display: grid; place-items: center; }
.x svg { width: 8px; height: 8px; stroke: #9a9a9e; overflow: visible; }
.panel { position: relative; display: flex; flex-direction: column; border: 1px solid #d6d6da; background: #fff; overflow: hidden; }
.thumb { position: absolute; border-radius: 2px; background: #e8e8ea; }

/* module navigation */
.nav { flex: none; width: 131px; border: 1px solid #d6d6da; background: #f5f7fa; overflow: hidden; }
.nav .bar span { margin-left: 13px; }
.nav > a { position: relative; display: flex; align-items: center; height: 42px; padding-left: 11px; gap: 14px; }
.nav > a > svg { width: 24px; height: 24px; flex: none; }
.nav > .on { background: #e9e9ed; color: #5087f0; }
.sub { background: #fff; }
.sub a { display: block; height: 28px; line-height: 28px; padding-left: 21px; }
.sub .on { color: #2080f0; }
.dot { position: absolute; left: 35px; top: 5px; width: 6px; height: 6px; border-radius: 50%; background: #f00; }
.badge { position: absolute; left: 65px; top: 4px; width: 58px; height: 19px; border-radius: 10px; background: linear-gradient(90deg, #f6d9a2, #ecb955); color: #6b3d10; font-style: normal; text-align: center; line-height: 19px; font-size: 11px; }
.nav > a > .lock { position: absolute; left: 94px; top: 14px; width: 9px; height: 11px; fill: none; stroke: #555; }

/* component and property lists */
.side { flex: none; width: 363px; margin: 0 4px; display: flex; flex-direction: column; gap: 4px; }
.list-panel { flex: 427 1 0; }
.prop-panel { flex: 390 1 0; }
.tab { height: 29px; width: 68px; margin-left: 0; }
.tab.on { margin-left: 11px; background: #fff; color: #1f74e6; }
.toolbar { flex: none; display: flex; gap: 9px; padding: 6px 10px 8px; }
.toolbar button { display: grid; place-items: center; width: 32px; height: 26px; border-radius: 3px; background: #f4f4f6; }
.toolbar .drop { width: 12px; margin-left: -8px; }
.search { flex: none; display: flex; align-items: center; height: 26px; margin: 0 9px 9px 8px; padding: 0 12px; border-radius: 13px; background: #f3f3f4; }
.search input { flex: 1; outline: 0; }
.search input::placeholder { color: #8a8a8e; }
.search svg { width: 11px; height: 11px; fill: none; stroke: #999; }
.members { flex: 1; min-height: 0; margin: 0; padding: 0 0 0 21px; list-style: none; overflow: hidden; }
.members li { display: flex; gap: 7px; height: 24px; line-height: 24px; padding-left: 3px; }
.members .on { width: 105px; height: 21px; line-height: 21px; margin: 1px 0 2px; border-radius: 2px; background: #c1d8f0; }
.t-list { right: 8px; top: 210px; width: 4px; height: 20px; }
.t-prop { right: 4px; top: 228px; width: 4px; bottom: 12px; }
.props { width: 348px; margin-top: 1px; border-collapse: separate; border-spacing: 0; table-layout: fixed; }
.props th { height: 24px; padding: 3px 0 0; background: #ececec; border: solid #d8d8da; border-width: 0 1px 1px 0; font-weight: 400; }
.props th:first-child { width: 101px; }
.props .v { font-weight: 700; }
.props td { height: 25px; padding: 2px 0 0 15px; white-space: nowrap; }
.props td + td { padding: 0; }
.props .k { color: #1a66ff; }
.props input { display: block; width: 100%; height: 21px; padding-left: 3px; border: 1px solid #dedee0; }
.props .ro { color: #8a8a8e; }
.props .fold td { background: #ebebeb; border-bottom: 1px solid #fff; padding-left: 10px; }
.fold i { display: inline-block; margin-right: 8px; border: 3px solid transparent; border-left-color: #888; border-right: 0; vertical-align: 2px; }

/* drawing area */
.work { flex: 1; min-width: 0; display: flex; flex-direction: column; gap: 4px; }
.canvas { position: relative; flex: 1; min-height: 0; background: #000; overflow: hidden; }
.cad { position: absolute; inset: 0; width: 100%; height: 100%; }
.cad-t, .cad-y { font: 400 34px "Noto Sans Mono CJK SC", Roboto, sans-serif; fill: #00a8a8; stroke: #000; stroke-width: 1.6; }
.cad-y { fill: #f4f400; }
.at { stroke-width: .5; fill-opacity: .75; }
.cad-t .over { stroke: none; opacity: .5; }
.cad-w { font: 400 19px "Noto Sans CJK SC", sans-serif; fill: #fff; }
.axis { font: 14px "Liberation Sans", sans-serif; }
.float { position: absolute; left: 1px; top: 1px; width: 148px; height: 179px; padding: 0 6px; border: 1px solid #2d6bab; background: #1e4a76; color: #fff; display: flex; flex-direction: column; gap: 6px; }
.float header { height: 12px; margin: 0 -6px; background: #1b3a60; display: flex; justify-content: flex-end; }
.float header button { width: 14px; display: grid; place-items: center; }
.float header svg { width: 5px; height: 5px; overflow: visible; stroke: #bcd6f0; stroke-width: 2; }
.split { display: flex; height: 26px; background: #22507f; border: 1px solid #17395c; }
.split button { flex: 1; }
.split .more { flex: none; width: 17px; border-left: 1px solid #17395c; display: grid; place-items: center; }
.more::after { content: ""; border: 4px solid transparent; border-top-color: #fff; border-bottom: 0; }
.views { position: absolute; right: 0; top: 0; width: 33px; padding: 7px 0 8px; border: 1px solid #d6d6da; border-radius: 0 0 2px 2px; background: #fff; display: flex; flex-direction: column; align-items: center; }
.views button { height: 29px; display: grid; place-items: center; }
.views .i { width: 20px; height: 20px; }
.views .car { margin: 4px 0 3px; }
.views hr { width: 23px; height: 1px; margin: 2px 0; border: 0; background: #555; }
.pull { position: absolute; }
.pull.right { right: 0; top: 270px; width: 16px; height: 62px; }
.pull.bottom { left: 50%; bottom: 0; width: 62px; height: 16px; margin-left: -30px; }

/* span table */
.sheet { flex: none; height: 217px; }
.sheet .bar span { margin-left: 13px; }
.cmds { flex: none; display: flex; align-items: center; gap: 12px; height: 28px; padding-left: 5px; }
.grid { flex: 1; min-height: 0; display: flex; flex-direction: column; overflow: hidden; margin-bottom: 12px; }
.grid table { width: 1304px; border-collapse: collapse; table-layout: fixed; flex: none; border-top: 1px solid #d9d9db; }
.grid th, .grid td { border: solid #d9d9db; border-width: 1px 1px 1px 0; padding: 0; font-weight: 400; white-space: nowrap; overflow: hidden; }
.grid th { height: 17px; line-height: 16px; }
.grid td { height: 21px; line-height: 20px; padding-left: 3px; }
.grid .pos { line-height: 17px; }
.grid .no { padding: 0; background: #eee; }
.n { width: 6px; }
.w41 { width: 41px; }
.w61 { width: 61px; }
.w81 { width: 81px; }
.w101 { width: 101px; }
.rb { width: 12px; height: 12px; fill: none; stroke: #2b2f36; vertical-align: -1px; }
.gutter { flex: 1; width: 6px; background: #eee; }
.t-sheet { left: 132px; width: 440px; bottom: 4px; height: 4px; }

/* clipped neighbour panel */
.edge { flex: none; display: flex; flex-direction: column; width: 11px; margin-left: 3px; border: solid #c4c4ca; border-width: 0 0 1px 1px; overflow: hidden; }
.edge header { height: 29px; padding: 7px 0 0 6px; background: #eeeef0; }
.edge .cap { height: 24px; margin: 3px 0 0 3px; border: solid #d4d4d8; border-width: 1px 0 0 1px; border-radius: 4px 0 0 0; }
.lines { flex: 1; margin: 2px 0 40px 3px; border-left: 2px solid #dcdcde; background: repeating-linear-gradient(#fff 0 20px, #dcdcde 20px 21px); }

/* status bar */
.status { flex: none; display: flex; align-items: flex-start; height: 15px; padding: 3px 0 0 3px; background: #fafafb; overflow: hidden; white-space: nowrap; }
.status span { flex: none; padding-top: 2px; }
.s1 { width: 89px; }
.s2 { width: 140px; }
.s3 { width: 110px; }
.s4 { width: 110px; }
.status button { flex: none; display: flex; align-items: center; gap: 4px; width: 25px; height: 24px; padding-left: 4px; margin-right: 3px; border: 1px solid #9a9a9e; border-radius: 3px; background: #fff; }
.status .wide { width: 36px; }
.status .on { border-color: #2379e0; background: #d3e4fb; }
.status .gap { margin-left: 4px; }
.status .hint { width: 10px; height: 10px; margin: 0 3px 0 21px; }
```
